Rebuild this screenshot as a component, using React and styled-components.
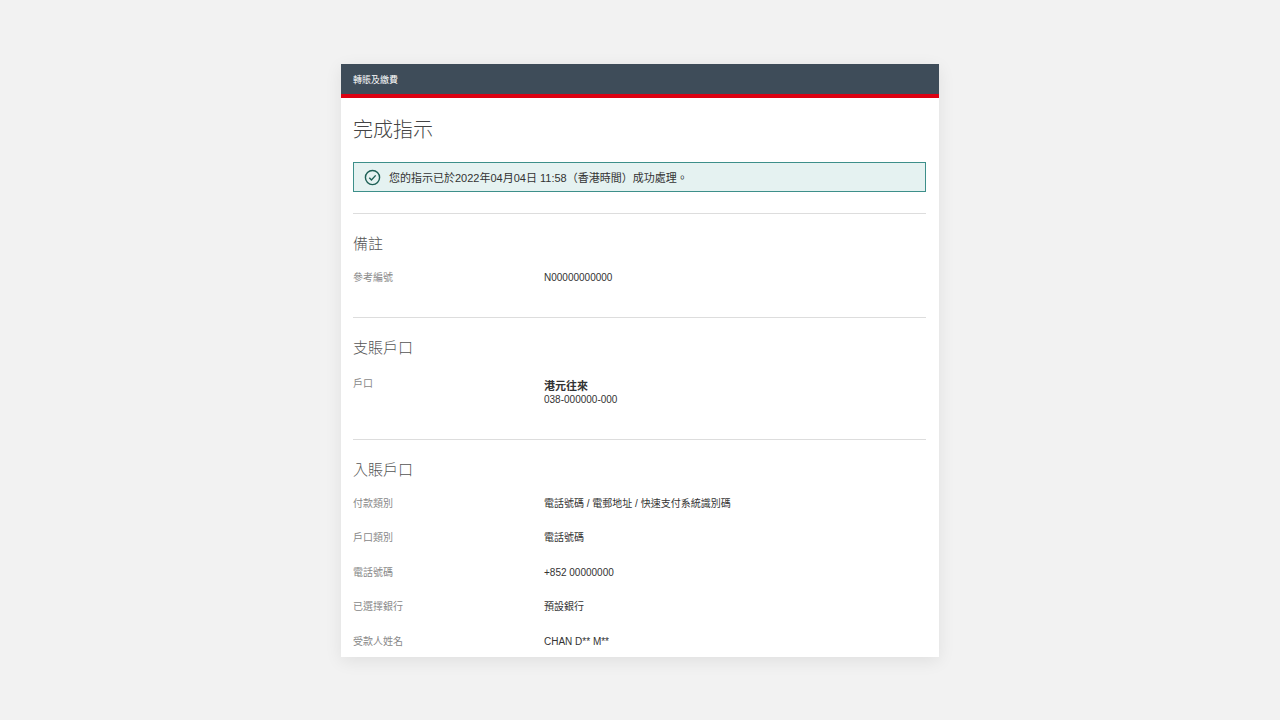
import styled, { createGlobalStyle } from 'styled-components';

const Global = createGlobalStyle`
  html, body { margin: 0; background: #f2f2f2; }
  body { font-family: Arial, "Liberation Sans", "Noto Sans CJK TC", sans-serif; }
`;

const Page = styled.div`
  height: 720px;
  display: flex;
  justify-content: center;
  padding-top: 64px;
  box-sizing: border-box;
  overflow: hidden;
`;

const Card = styled.div`
  width: 598px;
  height: 593px;
  background: #fff;
  overflow: hidden;
  box-shadow: 0 4px 16px rgba(0, 0, 0, 0.08);
`;

const Header = styled.div`
  height: 30px;
  background: #3e4c59;
  border-bottom: 4px solid #db0011;
  display: flex;
  align-items: center;
  padding: 0 12px;
  color: #fff;
  font-size: 9px;
`;

const Body = styled.div`
  padding: 0 13px 0 12px;
`;

const Title = styled.h1`
  margin: 0;
  padding-top: 20px;
  height: 44px;
  line-height: 24px;
  font-size: 20px;
  font-weight: 300;
  color: #444;
`;

const Banner = styled.div`
  height: 30px;
  box-sizing: border-box;
  border: 1px solid #3d8f8a;
  background: #e5f2f1;
  display: flex;
  align-items: center;
  gap: 8px;
  padding: 0 10px;
  font-size: 11px;
  color: #333;
  margin-bottom: 21px;
`;

const Section = styled.section`
  border-top: 1px solid #ddd;
  padding-bottom: 21px;
`;

const SectionTitle = styled.h2`
  margin: 0 0 7px;
  padding-top: 20px;
  line-height: 20px;
  font-size: 15px;
  font-weight: 300;
  color: #555;
`;

const Row = styled.div`
  display: grid;
  grid-template-columns: 191px 1fr;
  align-items: ${(p) => (p.$top ? 'start' : 'center')};
  min-height: 34.5px;
  padding: ${(p) => (p.$top ? '12px 0 11px' : '0')};
  box-sizing: border-box;
  font-size: 10px;
`;

const Label = styled.div`
  color: #888;
  line-height: 14px;
`;

const Value = styled.div`
  color: #333;
  line-height: 14px;
  padding-top: ${(p) => (p.$top ? '2px' : '0')};
`;

const Strong = styled.div`
  font-weight: 700;
  font-size: 11px;
`;

const CheckIcon = () => (
  <svg width="17" height="17" viewBox="0 0 24 24" fill="none" stroke="#1d5f55" strokeWidth="2">
    <circle cx="12" cy="12" r="10" />
    <path d="M7.5 12.5l3 3 6-6.5" />
  </svg>
);

const recipient = [
  ['付款類別', '電話號碼 / 電郵地址 / 快速支付系統識別碼'],
  ['戶口類別', '電話號碼'],
  ['電話號碼', '+852 00000000'],
  ['已選擇銀行', '預設銀行'],
  ['受款人姓名', 'CHAN D** M**'],
];

export default function App() {
  return (
    <Page>
      <Global />
      <Card>
        <Header>轉賬及繳費</Header>
        <Body>
          <Title>完成指示</Title>
          <Banner>
            <CheckIcon />
            您的指示已於2022年04月04日 11:58（香港時間）成功處理。
          </Banner>
          <Section>
            <SectionTitle>備註</SectionTitle>
            <Row>
              <Label>參考編號</Label>
              <Value>N00000000000</Value>
            </Row>
          </Section>
          <Section>
            <SectionTitle>支賬戶口</SectionTitle>
            <Row $top>
              <Label>戶口</Label>
              <Value $top>
                <Strong>港元往來</Strong>
                038-000000-000
              </Value>
            </Row>
          </Section>
          <Section>
            <SectionTitle>入賬戶口</SectionTitle>
            {recipient.map(([l, v]) => (
              <Row key={l}>
                <Label>{l}</Label>
                <Value>{v}</Value>
              </Row>
            ))}
          </Section>
        </Body>
      </Card>
    </Page>
  );
}
